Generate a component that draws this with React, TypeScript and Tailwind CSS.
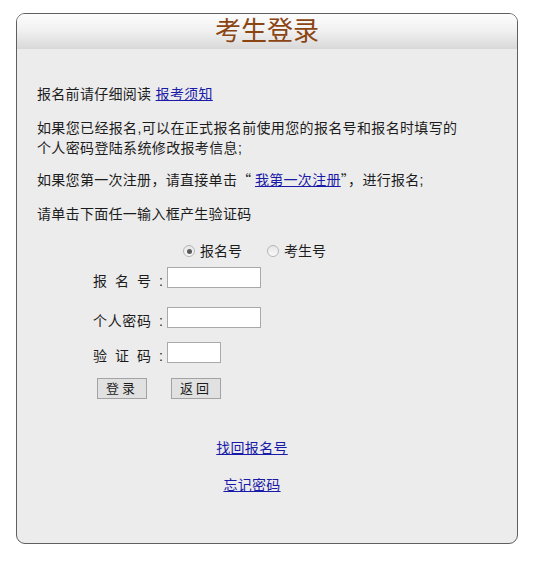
import React, { useState } from "react";

const font = "font-['Liberation_Sans','Noto_Sans_CJK_SC',sans-serif]";
const cjk = "font-['Noto_Sans_CJK_SC',sans-serif]";

function Radio({ checked, label, onClick }: { checked: boolean; label: string; onClick: () => void }) {
  return (
    <label className="flex items-center cursor-pointer" onClick={onClick}>
      <span className="w-[12px] h-[12px] rounded-full border border-[#b5b5b5] bg-gradient-to-b from-[#e6e6e6] to-[#fafafa] flex items-center justify-center">
        {checked && <span className="w-[5px] h-[5px] rounded-full bg-[#5a5a5a]" />}
      </span>
      <span className="ml-[5px]">{label}</span>
    </label>
  );
}

function FieldRow({ chars, inputWidth, className }: { chars: string[]; inputWidth: string; className?: string }) {
  return (
    <div className={`flex items-start pl-[56px] ${className ?? ""}`}>
      <span className="w-[58px] flex justify-between pt-[4px]">
        {chars.map((c) => (
          <span key={c}>{c}</span>
        ))}
      </span>
      <span className="w-[16px] pl-[8px] pt-[4px]">:</span>
      <input type="text" className={`${inputWidth} h-[21px] bg-white border border-[#a9a9a9] outline-none px-1`} />
    </div>
  );
}

export default function App() {
  const [mode, setMode] = useState<"bmh" | "ksh">("bmh");

  return (
    <div className={`min-h-[564px] bg-white pt-[13px] pl-[16px] ${font}`}>
      <div className="w-[502px] h-[531px] rounded-[9px] border border-[#5f5f5f] bg-[#ececec] overflow-hidden">
        <div className="h-[35px] bg-gradient-to-b from-[#fdfdfd] via-[#f0f0f0] to-[#d8d8d8] text-center text-[26px] leading-[35px] text-[#8b4513]">
          考生登录
        </div>

        <div className="pl-[20px] text-[14px] leading-[20px] text-[#1c1c1c]">
          <p className="mt-[35px] tracking-[0.3px]">
            报名前请仔细阅读 <a href="#" className="text-[#1a1aa8] underline">报考须知</a>
          </p>
          <p className="mt-[14px] w-[430px] tracking-[0.35px]">
            如果您已经报名,可以在正式报名前使用您的报名号和报名时填写的个人密码登陆系统修改报考信息;
          </p>
          <p className="mt-[11px] tracking-[0.3px]">
            如果您第一次注册<span className={cjk}>，</span>请直接单击<span className={cjk}>“ </span>
            <a href="#" className="text-[#1a1aa8] underline">我第一次注册</a>
            <span className={cjk}>”，</span>进行报名;
          </p>
          <p className="mt-[14px] tracking-[0.3px]">请单击下面任一输入框产生验证码</p>

          <div className="mt-[17px] flex items-center pl-[146px] gap-[25px]">
            <Radio checked={mode === "bmh"} label="报名号" onClick={() => setMode("bmh")} />
            <Radio checked={mode === "ksh"} label="考生号" onClick={() => setMode("ksh")} />
          </div>

          <FieldRow chars={["报", "名", "号"]} inputWidth="w-[94px]" className="mt-[6px]" />
          <FieldRow chars={["个", "人", "密", "码"]} inputWidth="w-[94px]" className="mt-[16px]" />
          <FieldRow chars={["验", "证", "码"]} inputWidth="w-[54px]" className="mt-[11px]" />

          <div className="mt-[12px] flex pl-[60px] gap-[24px]">
            <button className="w-[50px] h-[21px] bg-[#e1e1e1] border border-[#a3a3a3] text-[13px] leading-[19px] tracking-[3px]">
              登录
            </button>
            <button className="w-[50px] h-[21px] bg-[#e1e1e1] border border-[#a3a3a3] text-[13px] leading-[19px] tracking-[3px]">
              返回
            </button>
          </div>

          <div className="w-[430px] flex flex-col items-center tracking-[0.3px]">
            <a href="#" className="mt-[39px] text-[#1a1aa8] underline">找回报名号</a>
            <a href="#" className="mt-[17px] text-[#1a1aa8] underline">忘记密码</a>
          </div>
        </div>
      </div>
    </div>
  );
}
